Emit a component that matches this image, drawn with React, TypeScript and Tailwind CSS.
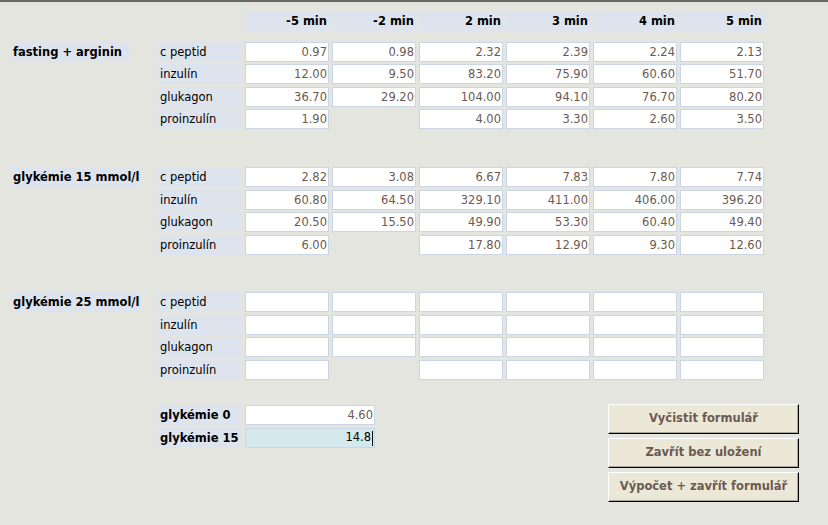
import React from "react";

type Val = string | null;

const headers = ["-5 min", "-2 min", "2 min", "3 min", "4 min", "5 min"];
const rowNames = ["c peptid", "inzulín", "glukagon", "proinzulín"];

const sections: { label: string; w: string; gaps: string[]; rows: Val[][] }[] = [
  {
    label: "fasting + arginin",
    w: "w-[119px]",
    gaps: ["", "mt-[2px]", "mt-[3px]", "mt-[2px]"],
    rows: [
      ["0.97", "0.98", "2.32", "2.39", "2.24", "2.13"],
      ["12.00", "9.50", "83.20", "75.90", "60.60", "51.70"],
      ["36.70", "29.20", "104.00", "94.10", "76.70", "80.20"],
      ["1.90", null, "4.00", "3.30", "2.60", "3.50"],
    ],
  },
  {
    label: "glykémie 15 mmol/l",
    w: "w-[130px]",
    gaps: ["", "mt-[3px]", "mt-[2px]", "mt-[3px]"],
    rows: [
      ["2.82", "3.08", "6.67", "7.83", "7.80", "7.74"],
      ["60.80", "64.50", "329.10", "411.00", "406.00", "396.20"],
      ["20.50", "15.50", "49.90", "53.30", "60.40", "49.40"],
      ["6.00", null, "17.80", "12.90", "9.30", "12.60"],
    ],
  },
  {
    label: "glykémie 25 mmol/l",
    w: "w-[130px]",
    gaps: ["", "mt-[3px]", "mt-[2px]", "mt-[3px]"],
    rows: [
      ["", "", "", "", "", ""],
      ["", "", "", "", "", ""],
      ["", "", "", "", "", ""],
      ["", null, "", "", "", ""],
    ],
  },
];

function Cell({ v }: { v: Val }) {
  if (v === null) return <div className="w-[84px] h-[20px]" />;
  return (
    <div className="w-[84px] h-[20px] box-border border border-[#ccd5e3] bg-white text-right pr-[1px] leading-[18px] text-[#6b5a51]">
      {v}
    </div>
  );
}

function Btn({ children }: { children: React.ReactNode }) {
  return (
    <div className="w-[191px] h-[30px] box-border border-t border-l border-white border-b border-r border-b-black border-r-black bg-[#ebe8d8] shadow-[inset_-1px_-1px_0_#aca899] flex items-center justify-center font-bold text-[#6b5a51]">
      {children}
    </div>
  );
}

export default function App() {
  return (
    <div className="w-[828px] h-[525px] bg-[#e5e5df] font-['DejaVu_Sans',sans-serif] text-[11.5px] text-black overflow-hidden">
      <div className="h-[2px] bg-[#6a6a62]" />
      {/* header */}
      <div className="flex mt-[9px] pl-[245px] gap-[2px]">
        {headers.map((h) => (
          <div
            key={h}
            className="w-[85px] h-[20px] bg-[#dee4ed] text-right pr-[3px] leading-[20px] font-bold"
          >
            {h}
          </div>
        ))}
      </div>
      {sections.map((s, si) => (
        <div
          key={s.label}
          className={`flex ${si === 0 ? "mt-[11px]" : si === 1 ? "mt-[38px]" : "mt-[37px]"}`}
        >
          <div className="w-[158px] pl-[11px]">
            <div className={`${s.w} h-[20px] bg-[#dee4ed] pl-[2px] leading-[20px] font-bold`}>
              {s.label}
            </div>
          </div>
          <div className="flex flex-col">
            {s.rows.map((r, ri) => (
              <div key={ri} className={`flex gap-[3px] ${s.gaps[ri]}`}>
                <div className="w-[84px] h-[20px] bg-[#dee4ed] pl-[2px] leading-[20px]">
                  {rowNames[ri]}
                </div>
                {r.map((v, ci) => (
                  <Cell key={ci} v={v} />
                ))}
              </div>
            ))}
          </div>
        </div>
      ))}
      {/* bottom */}
      <div className="flex mt-[24px] pr-[29px]">
        <div className="w-[158px]" />
        <div className="flex flex-col gap-[3px] mt-[1px]">
          <div className="flex gap-[3px]">
            <div className="w-[84px] h-[20px] bg-[#dee4ed] pl-[2px] leading-[20px] font-bold">
              glykémie 0
            </div>
            <div className="w-[130px] h-[20px] box-border border border-[#ccd5e3] bg-white text-right pr-[1px] leading-[18px] text-[#6b5a51]">
              4.60
            </div>
          </div>
          <div className="flex gap-[3px]">
            <div className="w-[84px] h-[20px] bg-[#dee4ed] pl-[2px] leading-[20px] font-bold">
              glykémie 15
            </div>
            <div className="w-[130px] h-[20px] box-border border border-[#ccd5e3] bg-[#d3e9ee] flex items-center justify-end pr-[1px] text-black">
              <span>14.8</span>
              <span className="inline-block w-[1px] h-[15px] bg-black ml-[1px]" />
            </div>
          </div>
        </div>
        <div className="ml-auto flex flex-col gap-[4px]">
          <Btn>Vyčistit formulář</Btn>
          <Btn>Zavřít bez uložení</Btn>
          <Btn>Výpočet + zavřít formulář</Btn>
        </div>
      </div>
    </div>
  );
}
